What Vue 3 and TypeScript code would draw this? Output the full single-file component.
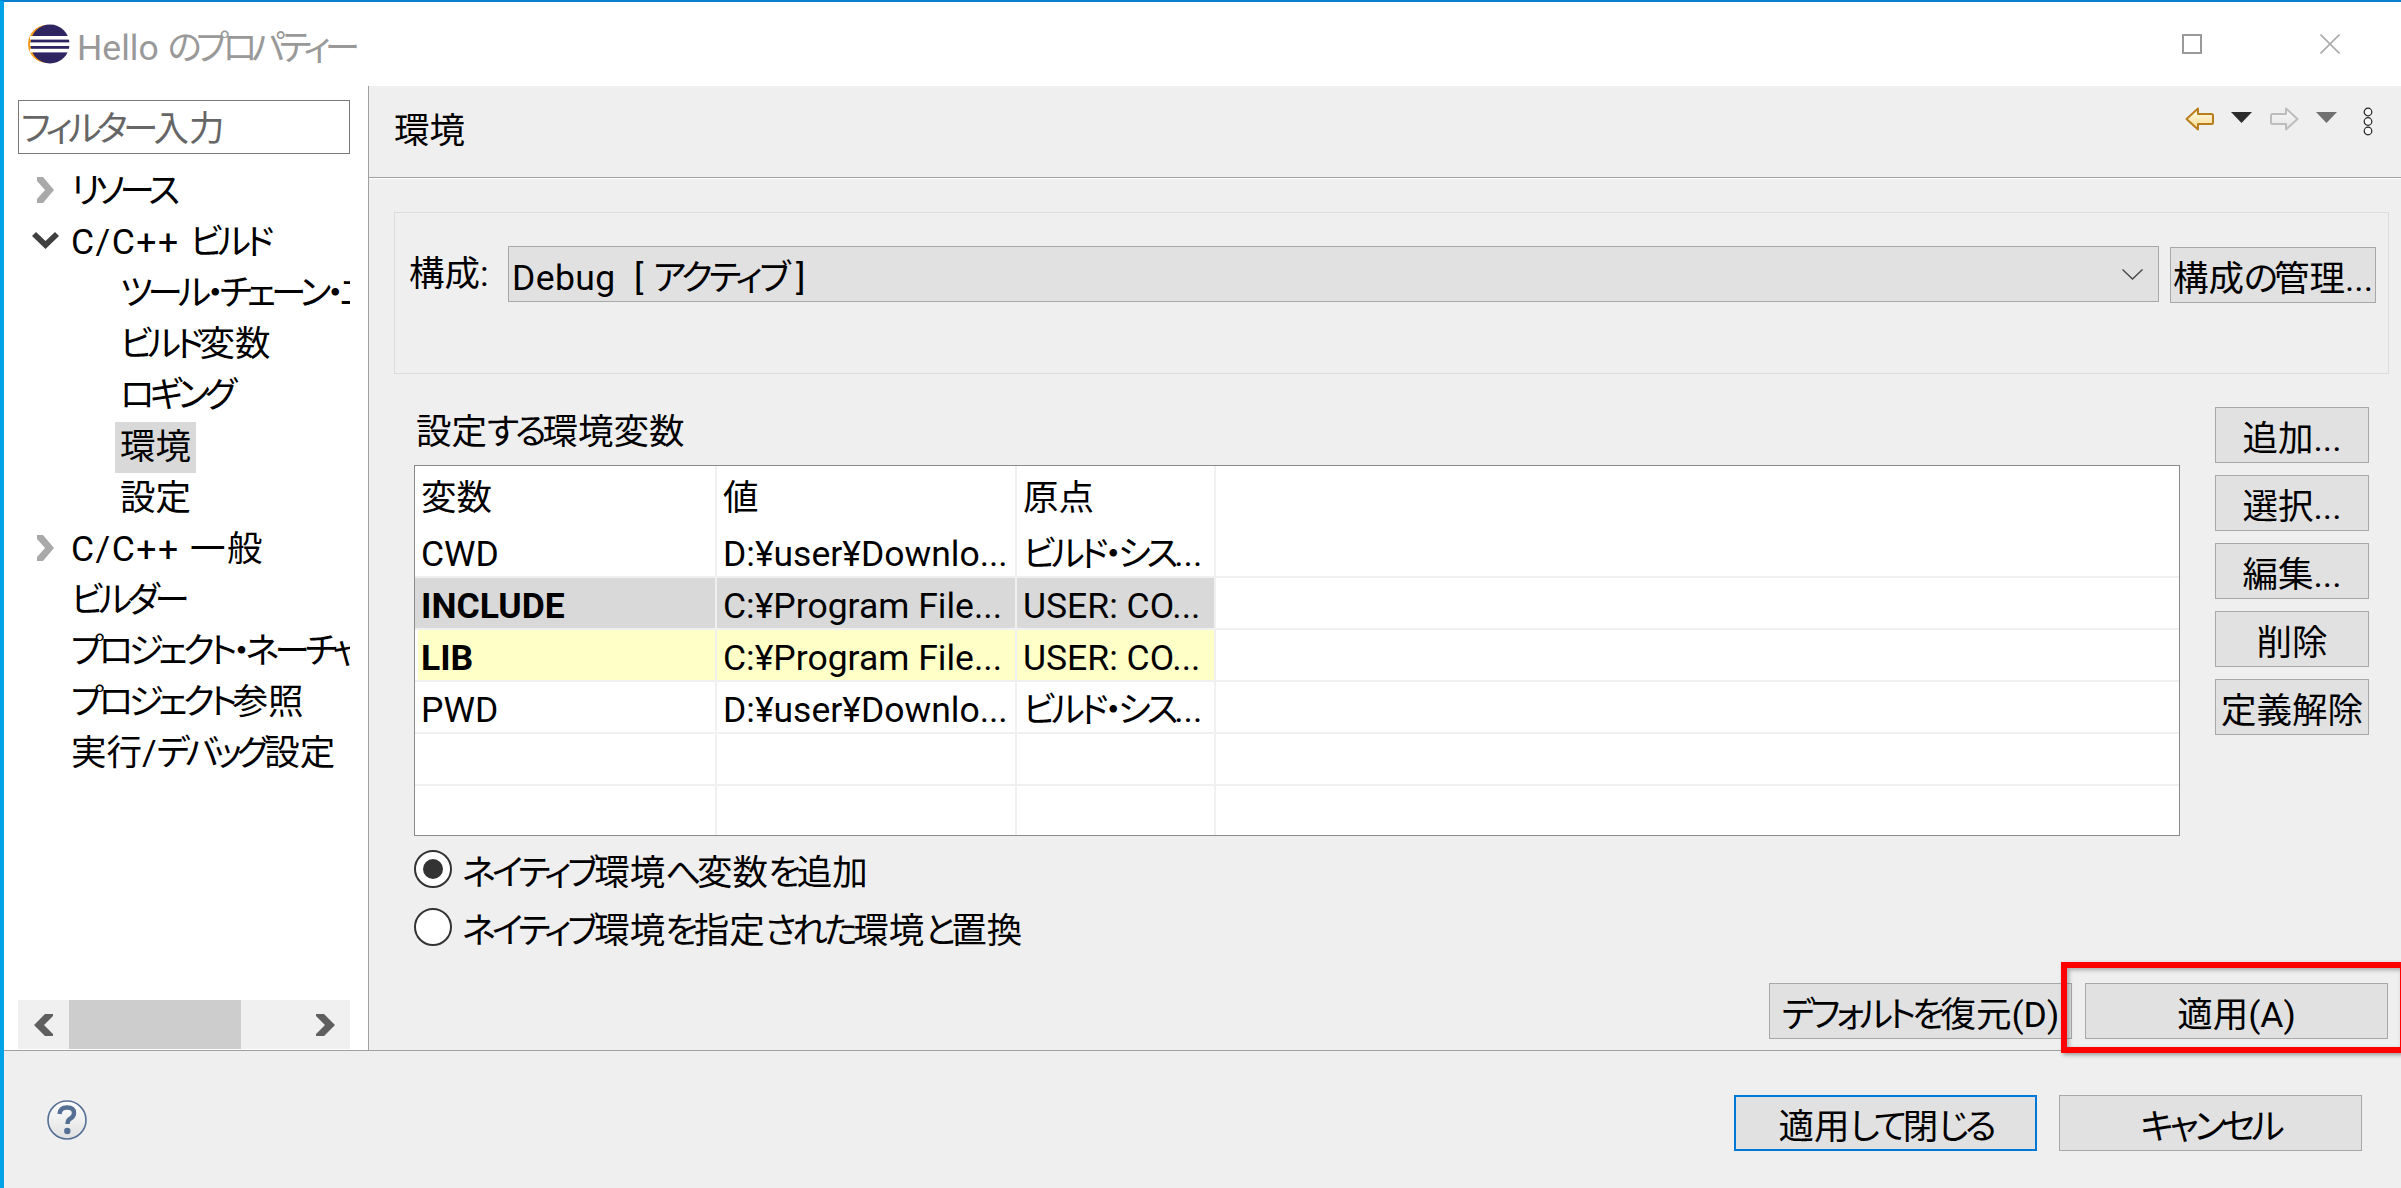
<script setup lang="ts">
import { h } from 'vue'

// Meiryo-style condensed kana: wrap kana runs so they can be tracked tighter than kanji.
const T = (props: { s: string }) =>
  props.s.split(/([\u3040-\u30ff]+)/).map((part, i) => (i % 2 ? h('span', { class: 'kana' }, part) : part))
T.props = ['s']

interface TreeItem { label: string; level: number; arrow?: 'right' | 'down'; selected?: boolean; wide?: boolean }
const tree: TreeItem[] = [
  { label: 'リソース', level: 0, arrow: 'right' },
  { label: 'C/C++ ビルド', level: 0, arrow: 'down', wide: true },
  { label: 'ツール・チェーン・エディター', level: 1 },
  { label: 'ビルド変数', level: 1 },
  { label: 'ロギング', level: 1 },
  { label: '環境', level: 1, selected: true },
  { label: '設定', level: 1 },
  { label: 'C/C++ 一般', level: 0, arrow: 'right', wide: true },
  { label: 'ビルダー', level: 0 },
  { label: 'プロジェクト・ネーチャー', level: 0 },
  { label: 'プロジェクト参照', level: 0 },
  { label: '実行/デバッグ設定', level: 0 },
]
const rows = [
  { cells: ['CWD', 'D:¥user¥Downlo...', 'ビルド・シス...'], kind: '' },
  { cells: ['INCLUDE', 'C:¥Program File...', 'USER: CO...'], kind: 'sel' },
  { cells: ['LIB', 'C:¥Program File...', 'USER: CO...'], kind: 'hl' },
  { cells: ['PWD', 'D:¥user¥Downlo...', 'ビルド・シス...'], kind: '' },
  { cells: ['', '', ''], kind: '' },
  { cells: ['', '', ''], kind: 'last' },
]
const sideButtons = ['追加...', '選択...', '編集...', '削除', '定義解除']
</script>

<template>
  <div class="window">
    <div class="taskbar-sliver"></div>
    <header class="titlebar">
      <svg class="logo" width="44" height="42" viewBox="0 0 44 42">
        <circle cx="20" cy="21" r="19" fill="#f39a1e" />
        <circle cx="23" cy="21" r="19.5" fill="#2e2560" />
        <rect x="3" y="13" width="40" height="3.6" fill="#fff" />
        <rect x="3" y="19.4" width="40" height="3.6" fill="#fff" />
        <rect x="3" y="25.8" width="40" height="3.6" fill="#fff" />
      </svg>
      <span class="title"><T s="Hello のプロパティー" /></span>
      <div class="win-controls">
        <svg width="20" height="20" viewBox="0 0 20 20"><rect x="1" y="1" width="18" height="18" fill="none" stroke="#999" stroke-width="2" /></svg>
        <svg width="20" height="20" viewBox="0 0 20 20"><path d="M0.5 0.5L19.5 19.5M19.5 0.5L0.5 19.5" stroke="#aaa" stroke-width="1.6" /></svg>
      </div>
    </header>

    <div class="main">
      <aside class="sidebar">
        <div class="filter"><T s="フィルター入力" /></div>
        <ul class="tree">
          <li v-for="item in tree" :key="item.label" class="tree-row" :class="item.level === 1 ? 'child' : 'top'">
            <svg v-if="item.arrow === 'right'" class="arrow-r" width="18" height="26" viewBox="0 0 18 26"><path d="M1 0H7L18 13L7 26H1L1 22L9 13L1 4Z" fill="#a9a9a9" /></svg>
            <svg v-if="item.arrow === 'down'" class="arrow-d" width="27" height="17" viewBox="0 0 27 17"><path d="M0 4L4 0L13.5 9L23 0L27 4L13.5 17Z" fill="#404040" /></svg>
            <span class="tree-label" :class="{ selected: item.selected, wide: item.wide }"><T :s="item.label" /></span>
          </li>
        </ul>
        <div class="hscroll">
          <div class="sb-btn"><svg width="20" height="22" viewBox="0 0 20 22"><path d="M11 0H19V2L10 11L19 20V22H11L0 11Z" fill="#5f5f5f" /></svg></div>
          <div class="sb-thumb"></div>
          <div class="sb-track"></div>
          <div class="sb-btn"><svg width="20" height="22" viewBox="0 0 20 22"><path d="M9 0H1V2L10 11L1 20V22H9L20 11Z" fill="#5f5f5f" /></svg></div>
        </div>
      </aside>

      <section class="content">
        <div class="page-head">
          <span class="page-title">環境</span>
          <div class="toolbar">
            <svg width="29" height="24" viewBox="0 0 29 24">
              <defs><linearGradient id="bk" x1="0" y1="0" x2="0" y2="1"><stop offset="0" stop-color="#fffdf0" /><stop offset="1" stop-color="#fbd98a" /></linearGradient></defs>
              <path d="M1.5 12L13 1.5V7H26.5Q28 7 28 8.5V15.5Q28 17 26.5 17H13V22.5Z" fill="url(#bk)" stroke="#b87d1c" stroke-width="2" stroke-linejoin="round" />
            </svg>
            <svg class="tri" width="21" height="11" viewBox="0 0 21 11"><path d="M0 0H21L10.5 11Z" fill="#2b2b2b" /></svg>
            <svg class="fwd" width="29" height="24" viewBox="0 0 29 24">
              <defs><linearGradient id="fw" x1="0" y1="0" x2="0" y2="1"><stop offset="0" stop-color="#fafafa" /><stop offset="1" stop-color="#e3e3e3" /></linearGradient></defs>
              <path d="M27.5 12L16 1.5V7H2.5Q1 7 1 8.5V15.5Q1 17 2.5 17H16V22.5Z" fill="url(#fw)" stroke="#bdbdbd" stroke-width="2" stroke-linejoin="round" />
            </svg>
            <svg class="tri" width="21" height="11" viewBox="0 0 21 11"><path d="M0 0H21L10.5 11Z" fill="#707070" /></svg>
            <svg class="kebab" width="10" height="29" viewBox="0 0 10 29">
              <circle cx="5" cy="5" r="3.8" fill="#f7f7f7" stroke="#222" stroke-width="1.2" />
              <circle cx="5" cy="14.5" r="3.8" fill="#f7f7f7" stroke="#222" stroke-width="1.2" />
              <circle cx="5" cy="24" r="3.8" fill="#f7f7f7" stroke="#222" stroke-width="1.2" />
            </svg>
          </div>
        </div>

        <div class="config-group">
          <span class="config-label">構成:</span>
          <div class="combo">
            <span class="combo-text"><T s="Debug&nbsp; [ アクティブ ]" /></span>
            <svg width="21" height="11" viewBox="0 0 21 11"><path d="M0.5 0.5L10.5 10L20.5 0.5" fill="none" stroke="#444" stroke-width="1.3" /></svg>
          </div>
          <button class="btn manage"><T s="構成の管理..." /></button>
        </div>

        <div class="env">
          <div class="env-left">
            <div class="env-label"><T s="設定する環境変数" /></div>
            <div class="table">
              <div class="tr head">
                <div class="td">変数</div><div class="td">値</div><div class="td">原点</div><div class="td fill"></div>
              </div>
              <div v-for="(r, i) in rows" :key="i" class="tr" :class="r.kind">
                <div v-for="(c, j) in r.cells" :key="j" class="td"><T :s="c" /></div>
                <div class="td fill"></div>
              </div>
            </div>
            <div class="radios">
              <label class="radio"><span class="dot on"></span><span><T s="ネイティブ環境へ変数を追加" /></span></label>
              <label class="radio"><span class="dot"></span><span><T s="ネイティブ環境を指定された環境と置換" /></span></label>
            </div>
          </div>
          <div class="env-right">
            <button v-for="b in sideButtons" :key="b" class="btn side">{{ b }}</button>
          </div>
        </div>

        <div class="apply-row">
          <button class="btn wide-btn"><T s="デフォルトを復元(D)" /></button>
          <button class="btn wide-btn">適用(A)</button>
        </div>
      </section>
    </div>

    <footer class="footer">
      <svg class="help" width="40" height="40" viewBox="0 0 40 40">
        <defs><linearGradient id="hp" x1="0" y1="0" x2="0" y2="1"><stop offset="0" stop-color="#fff" /><stop offset="1" stop-color="#e0e0e0" /></linearGradient></defs>
        <circle cx="20" cy="20" r="19" fill="url(#hp)" stroke="#566f95" stroke-width="1.6" />
        <path d="M12.5 14Q13 7.5 20 7.5Q27 7.5 27 13Q27 16.5 23.5 18.5Q20.5 20 20.5 24" fill="none" stroke="#566f95" stroke-width="4.4" />
        <circle cx="20.3" cy="31" r="3.2" fill="#566f95" />
      </svg>
      <div class="footer-btns">
        <button class="btn wide-btn primary"><T s="適用して閉じる" /></button>
        <button class="btn wide-btn"><T s="キャンセル" /></button>
      </div>
    </footer>

    <div class="callout"></div>
  </div>
</template>

<style>
html, body { margin: 0; padding: 0; background: #fff; }
.kana { letter-spacing: -4.2px; }
.title .kana { letter-spacing: -5.8px; }
.filter .kana { letter-spacing: -4.6px; }
.tree .kana { letter-spacing: -4.8px; }
.combo-text .kana { letter-spacing: -3.6px; }
</style>

<style scoped>
* { box-sizing: border-box; }
.window {
  position: relative;
  width: 2401px;
  height: 1188px;
  overflow: hidden;
  display: flex;
  flex-direction: column;
  background: #efefef;
  border-top: 2px solid #0a7fd0;
  border-left: 4px solid #00a2e8;
  font-family: Roboto, "Noto Sans CJK JP", sans-serif;
  font-feature-settings: "palt";
  font-size: 35.5px;
  color: #000;
}
.taskbar-sliver {
  position: absolute;
  left: 98px;
  top: -2px;
  width: 83px;
  height: 2px;
  background: #2a2a2a;
}
.titlebar {
  height: 84px;
  flex: none;
  display: flex;
  align-items: center;
  background: #fff;
  padding: 0 61px 0 23px;
}
.logo { flex: none; }
.title { margin-left: 6px; color: #999; }
.win-controls { margin-left: auto; display: flex; gap: 118px; }
.main { height: 964px; flex: none; display: flex; }
.sidebar {
  width: 365px;
  flex: none;
  display: flex;
  flex-direction: column;
  background: #fff;
  border-right: 1px solid #a0a0a0;
  padding: 14px 0 1px 14px;
}
.filter {
  width: 332px;
  height: 54px;
  flex: none;
  border: 1px solid #7a7a7a;
  color: #666;
  line-height: 56px;
  padding-left: 2px;
}
.tree {
  list-style: none;
  margin: 12px 0 0;
  padding: 0;
  width: 332px;
  flex: 1;
  overflow: hidden;
}
.tree-row {
  position: relative;
  height: 51.1px;
  display: flex;
  align-items: center;
  white-space: nowrap;
}
.tree-row.top { padding-left: 53px; }
.tree-row.child { padding-left: 97px; }
.arrow-r { position: absolute; left: 18px; top: 11px; }
.arrow-d { position: absolute; left: 14px; top: 15px; }
.tree-label { line-height: 51px; }
.tree-label.wide { letter-spacing: 1.5px; }
.tree-row.child .tree-label { padding: 0 5px; }
.tree-label.selected { background: #d9d9d9; }
.hscroll { width: 332px; height: 49px; flex: none; display: flex; background: #f0f0f0; }
.sb-btn { width: 51px; flex: none; display: flex; align-items: center; justify-content: center; }
.sb-thumb { width: 172px; flex: none; background: #cdcdcd; }
.sb-track { flex: 1; }
.content { flex: 1; display: flex; flex-direction: column; min-width: 0; }
.page-head {
  height: 92px;
  flex: none;
  display: flex;
  justify-content: space-between;
  padding: 0 28px 0 25px;
  border-bottom: 1px solid #a0a0a0;
  box-shadow: 0 1px 0 #fff;
}
.page-title { line-height: 90px; }
.toolbar { display: flex; align-items: flex-start; padding-top: 21px; }
.toolbar .tri { margin: 5px 0 0 17px; }
.toolbar .fwd { margin-left: 18px; }
.toolbar .kebab { margin-left: 26px; }
.config-group {
  height: 162px;
  margin: 34px 12px 0 25px;
  flex: none;
  display: flex;
  align-items: flex-start;
  border: 1px solid #dcdcdc;
  padding: 33px 12px 0 14px;
}
.config-label { width: 99px; flex: none; line-height: 56px; }
.combo {
  width: 1651px;
  height: 56px;
  flex: none;
  display: flex;
  align-items: center;
  justify-content: space-between;
  background: #e1e1e1;
  border: 1px solid #a8a8a8;
  padding: 0 15px 0 3px;
}
.combo-text { letter-spacing: 0.4px; white-space: pre; }
.btn {
  display: block;
  background: #e1e1e1;
  border: 1px solid #a8a8a8;
  border-radius: 0;
  font: inherit;
  font-feature-settings: inherit;
  color: #000;
  padding: 0;
  height: 56px;
  white-space: nowrap;
}
.manage { width: 207px; margin-left: 11px; margin-top: 1px; }
.env { display: flex; flex: none; margin: 33px 0 0 45px; }
.env-left { width: 1766px; flex: none; }
.env-label { height: 58px; line-height: 50px; padding-left: 2px; }
.table { height: 371px; border: 1px solid #8a8a8a; background: #fff; overflow: hidden; }
.tr { display: grid; grid-template-columns: 302px 300px 199px 1fr; height: 52px; }
.tr.head { height: 60px; }
.td {
  padding: 4px 0 0 6px;
  line-height: 49px;
  white-space: nowrap;
  overflow: hidden;
  border-right: 2px solid #f0f0f0;
  border-bottom: 2px solid #f0f0f0;
}
.tr.head .td { line-height: 57px; border-bottom: none; }
.tr.last .td { border-bottom: none; }
.td.fill { border-right: none; }
.tr.sel .td:not(.fill) { background: #d9d9d9; }
.tr.hl .td:not(.fill) { background: #ffffc8; }
.tr.hl .td:first-child { box-shadow: inset 3px 0 #fff; }
.tr.sel .td:first-child, .tr.hl .td:first-child { font-weight: 700; }
.radios { margin-top: 14px; display: flex; flex-direction: column; gap: 20px; }
.radio { height: 38px; display: flex; align-items: center; gap: 10px; white-space: nowrap; }
.dot {
  width: 38px;
  height: 38px;
  flex: none;
  border-radius: 50%;
  border: 2px solid #333;
  background: #fff;
  display: flex;
  align-items: center;
  justify-content: center;
}
.dot.on::after { content: ""; width: 20px; height: 20px; border-radius: 50%; background: #333; }
.env-right { margin-left: 35px; display: flex; flex-direction: column; gap: 12px; }
.side { width: 154px; }
.apply-row { display: flex; justify-content: flex-end; gap: 13px; margin-top: 37px; padding-right: 13px; }
.wide-btn { width: 303px; }
.footer {
  flex: 1;
  display: flex;
  align-items: flex-start;
  justify-content: space-between;
  border-top: 1px solid #a0a0a0;
  padding: 44px 39px 0 43px;
}
.help { margin-top: 5px; }
.footer-btns { display: flex; gap: 22px; }
.primary { border: 2px solid #0078d7; }
.callout {
  position: absolute;
  left: 2057px;
  top: 960px;
  width: 345px;
  height: 91px;
  border: 6px solid #ff0000;
  box-shadow: 2px 2px 4px rgba(0, 0, 0, 0.35), inset 2px 2px 4px rgba(0, 0, 0, 0.3);
}
</style>
